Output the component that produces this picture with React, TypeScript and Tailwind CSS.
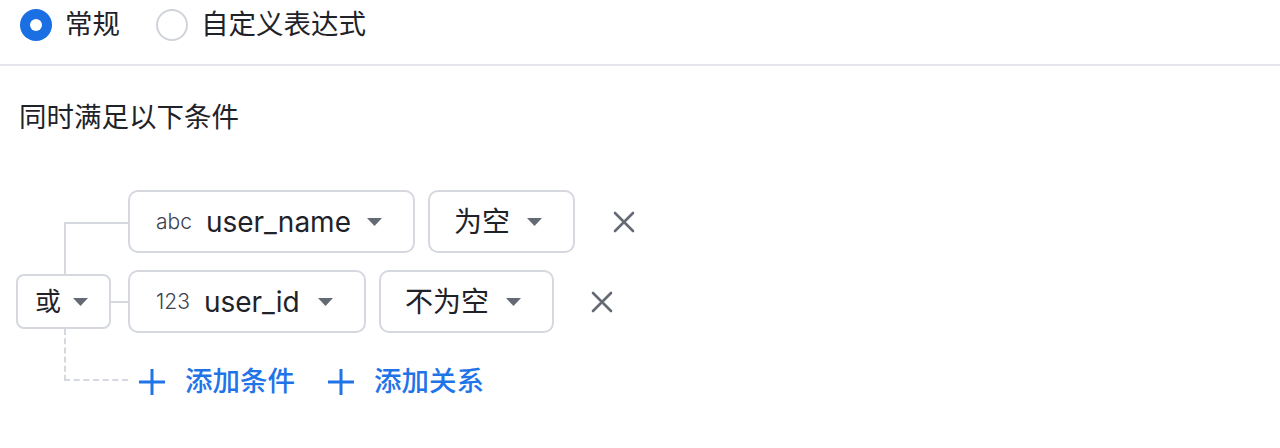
import { useState } from "react";

const font = { fontFamily: '"Inter", "Noto Sans CJK SC", sans-serif' };

function Caret() {
  return (
    <svg width="15" height="8" viewBox="0 0 15 8" className="shrink-0">
      <path d="M0 0 H15 L7.5 8 Z" fill="#646a73" />
    </svg>
  );
}

function Close() {
  return (
    <svg width="22" height="22" viewBox="0 0 22 22" className="shrink-0">
      <path d="M2 2 L20 20 M20 2 L2 20" stroke="#646a73" strokeWidth="2.6" strokeLinecap="round" />
    </svg>
  );
}

function Plus() {
  return (
    <svg width="28" height="28" viewBox="0 0 28 28" className="shrink-0">
      <path d="M14 1 V27 M1 14 H27" stroke="#1f74e8" strokeWidth="3" />
    </svg>
  );
}

function Radio({ on, label }: { on: boolean; label: string }) {
  return (
    <label className="flex items-center gap-[13px] cursor-pointer">
      {on ? (
        <span className="grid place-items-center w-[32px] h-[32px] rounded-full bg-[#1a6fe3]">
          <span className="w-[12px] h-[12px] rounded-full bg-white" />
        </span>
      ) : (
        <span className="w-[32px] h-[32px] rounded-full border-2 border-[#d0d3d9] bg-white" />
      )}
      <span className="text-[27.5px] text-[#1f2329] leading-none">{label}</span>
    </label>
  );
}

function Select({ w, tag, text, pl = 26, pr = 31 }: { w: number; tag?: string; text: string; pl?: number; pr?: number }) {
  return (
    <div
      className="flex items-center justify-between h-[63px] rounded-[10px] border-2 border-[#d5d8de] bg-white shrink-0"
      style={{ width: w, paddingLeft: pl, paddingRight: pr }}
    >
      <div className="flex items-center gap-[14px]">
        {tag && <span className="text-[21px] text-[#3b4252] font-light">{tag}</span>}
        <span className="text-[28px] text-[#1f2329]">{text}</span>
      </div>
      <Caret />
    </div>
  );
}

export default function App() {
  const [mode, setMode] = useState("normal");

  return (
    <div className="w-[1280px] h-[448px] bg-white overflow-hidden" style={font}>
      {/* mode switch */}
      <div className="flex items-center gap-[36px] h-[50px] pl-[20px]">
        <div onClick={() => setMode("normal")}>
          <Radio on={mode === "normal"} label="常规" />
        </div>
        <div onClick={() => setMode("expr")}>
          <Radio on={mode === "expr"} label="自定义表达式" />
        </div>
      </div>
      <div className="mt-[14px] h-[2px] bg-[#e5e6eb]" />

      <div className="pl-[19px] mt-[31px] text-[27.5px] leading-[40px] text-[#1f2329]">同时满足以下条件</div>

      {/* condition tree */}
      <div className="flex mt-[53px] pl-[16px]">
        {/* connectors + relation */}
        <div className="flex flex-col w-[112px] shrink-0">
          <div className="h-[32px]" />
          <div className="ml-[48px] h-[52px] border-l-2 border-t-2 border-[#d5d8de]" />
          <div className="flex items-center">
            <div className="flex items-center justify-between w-[95px] h-[55px] pl-[17px] pr-[21px] rounded-[8px] border-2 border-[#d5d8de] bg-white">
              <span className="text-[26px] text-[#1f2329]">或</span>
              <Caret />
            </div>
            <div className="flex-1 h-[2px] bg-[#d5d8de]" />
          </div>
          <div className="ml-[48px] h-[52px] border-l-2 border-b-2 border-dashed border-[#d5d8de]" />
        </div>

        <div className="flex flex-col">
          <div className="flex items-center">
            <Select w={287} tag="abc" text="user_name" />
            <div className="ml-[13px]">
              <Select w={147} text="为空" pl={24} />
            </div>
            <div className="ml-[38px]">
              <Close />
            </div>
          </div>
          <div className="flex items-center mt-[17px]">
            <Select w={238} tag="123" text="user_id" pr={31} />
            <div className="ml-[13px]">
              <Select w={175} text="不为空" pl={24} />
            </div>
            <div className="ml-[37px]">
              <Close />
            </div>
          </div>
          <div className="flex items-center h-[48px] mt-[25px] pl-[10px] text-[27.5px] font-medium text-[#1f74e8]">
            <button className="flex items-center gap-[19px]">
              <Plus />
              <span>添加条件</span>
            </button>
            <button className="flex items-center gap-[19px] ml-[32px]">
              <Plus />
              <span>添加关系</span>
            </button>
          </div>
        </div>
      </div>
    </div>
  );
}
